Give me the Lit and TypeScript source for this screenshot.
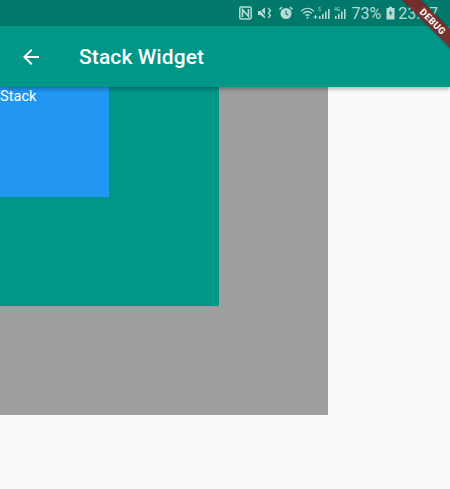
import { LitElement, html, css, svg } from "lit";
import { customElement } from "lit/decorators.js";

@customElement("app-root")
export class AppRoot extends LitElement {
  static styles = css`
    :host { display: block; width: 450px; height: 489px; position: relative; overflow: hidden; background: #fafafa; font-family: Roboto, sans-serif; }
    .bar { background: #009688; height: 87px; box-shadow: 0 2px 4px rgba(0,0,0,.3); position: relative; z-index: 2; display: flex; flex-direction: column; }
    .status { height: 26px; background: #00796b; display: flex; align-items: center; justify-content: flex-end; color: #b9dbd6; padding-right: 12px; flex: none; }
    .status svg { display: block; flex: none; }
    .pct { font-size: 16px; margin-left: 3px; }
    .time { font-size: 16px; margin-left: 3px; }
    .tool { flex: 1; display: flex; align-items: center; color: #fff; }
    .back { width: 24px; height: 24px; margin-left: 19px; }
    .title { font-size: 21px; font-weight: 500; margin-left: 36px; letter-spacing: 0.1px; }
    .grey { width: 328px; height: 328px; background: #9e9e9e; }
    .teal { width: 219px; height: 219px; background: #009688; }
    .blue { width: 109px; height: 110px; background: #2196f3; color: #fff; font-size: 14.6px; line-height: 19px; }
    .banner { position: absolute; z-index: 3; top: 0; right: 0; width: 60px; height: 60px; overflow: hidden; pointer-events: none; }
    .ribbon { position: absolute; left: -2px; top: 15px; width: 90px; height: 13px; background: rgba(128,38,38,.9); transform: rotate(45deg); color: #fff; font: 700 9.5px/13px Roboto, sans-serif; letter-spacing: .4px; text-align: center; box-shadow: 0 0 3px rgba(0,0,0,.3); }
  `;

  private sig(extra: unknown) {
    return svg`<path d="M1 13h1.6v-3H1zM4 13h1.6V8H4zM7 13h1.6V5.5H7zM10 13h1.6V3H10z" fill="currentColor"/>${extra}`;
  }

  render() {
    return html`
      <div class="bar">
        <div class="status">
          <svg width="13" height="14" viewBox="0 0 13 14" fill="none" stroke="currentColor"><rect x=".8" y="1" width="11.4" height="12" rx="1.5" stroke-width="1.5"/><path d="M3.5 11V3.6l6 6.8V3" stroke-width="1.6"/></svg>
          <svg width="16" height="14" viewBox="0 0 16 14" style="margin-left:5px" fill="currentColor"><path d="M1 5h2.5L8 1.5v11L3.5 9H1z"/><path d="M1.5 1.5l8 10" stroke="#00796b" stroke-width="1.2"/><path d="M11 2l2.5 2.5-2 2.5 2 2.5L11 12" fill="none" stroke="currentColor" stroke-width="1.3"/></svg>
          <svg width="14" height="14" viewBox="0 0 14 14" style="margin-left:6px"><circle cx="7" cy="7.5" r="5.5" fill="currentColor"/><path d="M7 4.5v3.3l2.3 1.2" fill="none" stroke="#00796b" stroke-width="1.1"/><path d="M.5 3.5L3 1M13.5 3.5L11 1" stroke="currentColor" stroke-width="1.5"/></svg>
          <svg width="18" height="14" viewBox="0 0 18 14" style="margin-left:7px" fill="none" stroke="currentColor" stroke-width="1.3"><path d="M1 5.2C5 1.300 10 1.300 14 5.200M3.200 7.500c2.800-2.600 5.800-2.600 8.600 0M5.500 9.600c1.400-1.200 2.600-1.200 4 0"/><circle cx="7.500" cy="11.700" r="1" fill="currentColor" stroke="none"/><path d="M13.500 11h4M15.500 9v4" stroke-width="1"/></svg>
          <svg width="13" height="14" viewBox="0 0 13 14" style="margin-left:0">${this.sig(svg`<text x="0" y="5" font-size="5" font-family="Roboto" fill="currentColor">5</text>`)}</svg>
          <svg width="14" height="14" viewBox="0 0 14 14" style="margin-left:3px">${this.sig(svg`<text x="0" y="5" font-size="5" font-family="Roboto" fill="currentColor">4G</text>`)}</svg>
          <span class="pct">73%</span>
          <svg width="9" height="14" viewBox="0 0 9 14" style="margin-left:5px"><path d="M3 .8h3v1.200h2.500v11.500H.5V2H3z" fill="currentColor"/><path d="M5 4L2.800 7.500h1.700L3.800 10.500 6.500 6.500H4.800z" fill="#00796b"/></svg>
          <span class="time">23:37</span>
        </div>
        <div class="tool">
          <svg class="back" viewBox="0 0 24 24" fill="#fff"><path d="M20 11H7.830l5.590-5.590L12 4l-8 8 8 8 1.410-1.410L7.830 13H20v-2z"/></svg>
          <span class="title">Stack Widget</span>
        </div>
      </div>
      <div class="grey"><div class="teal"><div class="blue">Stack</div></div></div>
      <div class="banner"><div class="ribbon">DEBUG</div></div>
    `;
  }
}
